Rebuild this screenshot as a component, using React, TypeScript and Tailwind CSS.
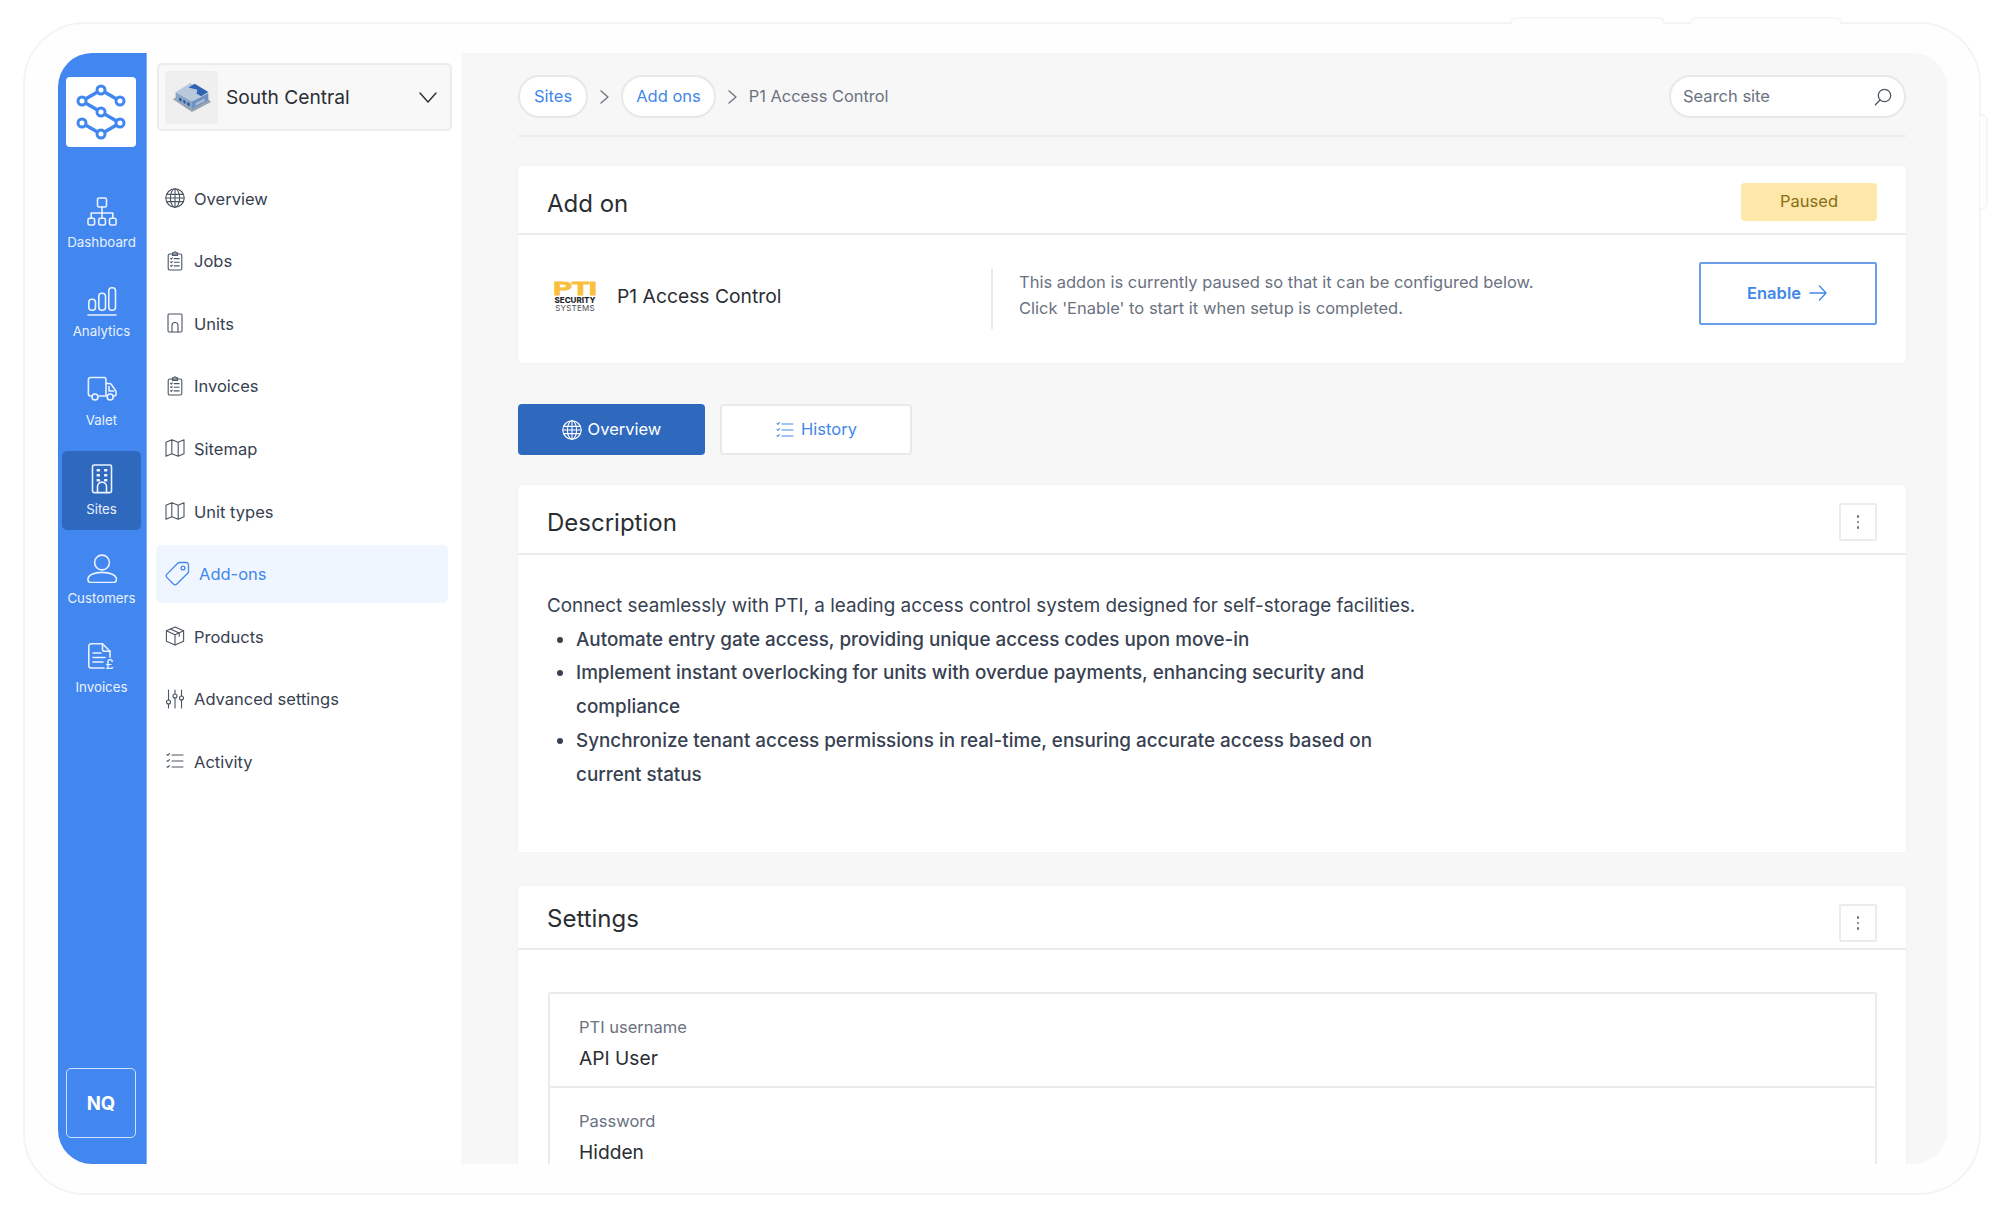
import type { ReactNode } from 'react'

function RailIcon({ children }: { children: ReactNode }) {
  return (
    <svg width="30" height="30" viewBox="0 0 30 30" fill="none" stroke="currentColor" strokeWidth="1.6" strokeLinecap="round" strokeLinejoin="round">
      {children}
    </svg>
  )
}

function NavIcon({ children }: { children: ReactNode }) {
  return (
    <svg className="shrink-0" width="20" height="20" viewBox="0 0 20 20" fill="none" stroke="currentColor" strokeWidth="1.1" strokeLinecap="round" strokeLinejoin="round">
      {children}
    </svg>
  )
}

const GlobeShape = () => (
  <>
    <circle cx="10" cy="10" r="9.2" />
    <ellipse cx="10" cy="10" rx="4.6" ry="9.2" />
    <path d="M10 .8v18.4M1.6 6.4h16.8M.8 10h18.4M1.6 13.6h16.8" />
  </>
)

const ListShape = () => (
  <>
    <path d="M2 3.5l.8.9L4.4 2.6M2 9.6l.8.9 1.6-1.8M2 15.6l.8.9 1.6-1.8" />
    <path d="M7 4h11M7 10h11M7 16h11" />
  </>
)

const ClipboardShape = () => (
  <>
    <rect x="3.2" y="3" width="13.6" height="16" rx="1.6" />
    <path d="M7.5 3V1.9h1.4a1.1 1.1 0 0 1 2.2 0h1.4V3v1.4h-5V3z" />
    <path d="M5.6 7.4l.7.7 1-1.2M5.6 11l.7.7 1-1.2M5.6 14.7l.7.7 1-1.2M9.2 7.6h5M9.2 11.2h5M9.2 14.9h5" />
  </>
)

const MapShape = () => (
  <path d="M1 4.2l5.8-2.4 6.4 2.4L19 1.8v14l-5.8 2.4-6.4-2.4L1 18.2zM6.8 1.8v14M13.2 4.2v14" />
)

const navItems: { label: string; icon: ReactNode }[] = [
  { label: 'Overview', icon: <GlobeShape /> },
  { label: 'Jobs', icon: <ClipboardShape /> },
  {
    label: 'Units',
    icon: (
      <>
        <rect x="3" y="1" width="14" height="18" rx="1.2" />
        <path d="M7 19v-6.5a3 3 0 0 1 6 0V19" />
      </>
    ),
  },
  { label: 'Invoices', icon: <ClipboardShape /> },
  { label: 'Sitemap', icon: <MapShape /> },
  { label: 'Unit types', icon: <MapShape /> },
  { label: 'Add-ons', icon: null },
  {
    label: 'Products',
    icon: (
      <>
        <path d="M10 1l8.6 3.8v10.4L10 19l-8.6-3.8V4.8z" />
        <path d="M1.4 4.8L10 8.8l8.6-4M10 8.8V19M5.4 2.9l8.8 4v3.4" />
      </>
    ),
  },
  {
    label: 'Advanced settings',
    icon: (
      <>
        <path d="M3.5 1v10M3.5 15v4M10 1v4M10 9v10M16.5 1v6M16.5 11v8" />
        <circle cx="3.5" cy="13" r="2" />
        <circle cx="10" cy="7" r="2" />
        <circle cx="16.5" cy="9" r="2" />
      </>
    ),
  },
  { label: 'Activity', icon: <ListShape /> },
]

const railItems: { label: string; active?: boolean; icon: ReactNode }[] = [
  {
    label: 'Dashboard',
    icon: (
      <>
        <rect x="10.5" y="1" width="9" height="9" rx="1.4" />
        <path d="M15 10v6M4.2 21v-5h21.6v5M15 16v5" />
        <rect x="1" y="21.3" width="6.6" height="6.7" rx="1.6" />
        <rect x="11.8" y="21.3" width="6.6" height="6.7" rx="1.6" />
        <rect x="22.5" y="21.3" width="6.6" height="6.7" rx="1.6" />
      </>
    ),
  },
  {
    label: 'Analytics',
    icon: (
      <>
        <rect x="1.8" y="13.3" width="6.7" height="11" rx="3" />
        <rect x="11.8" y="7.3" width="6.7" height="17" rx="3" />
        <rect x="21.8" y="1.7" width="6.7" height="22.6" rx="3" />
        <path d="M1 29h28" />
      </>
    ),
  },
  {
    label: 'Valet',
    icon: (
      <g transform="translate(0 -2.5)">
        <path d="M4.5 23.5H3.4a2 2 0 0 1-2-2V7a2 2 0 0 1 2-2h13.600a2 2 0 0 1 2 2v16.500h-7" />
        <path d="M19 11h3.400c.8 0 1.500.4 1.900 1l3.900 5.400c.5.6.8 1.300.8 2.100V22a1.600 1.600 0 0 1-1.600 1.500h-1.200" />
        <path d="M22 14v4.500h4.800" />
        <circle cx="8" cy="24.5" r="3" />
        <circle cx="23.2" cy="24.5" r="3" />
      </g>
    ),
  },
  {
    label: 'Sites',
    active: true,
    icon: (
      <g transform="translate(0 -1)">
        <rect x="5.5" y="2" width="19" height="27.6" rx="1.6" />
        <path d="M10.5 29.600v-6a4.500 4.500 0 0 1 9 0v6" />
        <g fill="currentColor" stroke="none">
          <rect x="9.6" y="6" width="3.4" height="2.6" rx=".6" />
          <rect x="17" y="6" width="3.4" height="2.6" rx=".6" />
          <rect x="9.6" y="11" width="3.4" height="2.6" rx=".6" />
          <rect x="17" y="11" width="3.4" height="2.6" rx=".6" />
          <rect x="9.6" y="16" width="3.4" height="2.6" rx=".6" />
          <rect x="17" y="16" width="3.4" height="2.6" rx=".6" />
        </g>
      </g>
    ),
  },
  {
    label: 'Customers',
    icon: (
      <>
        <circle cx="15" cy="9.5" r="7.4" />
        <path d="M4.500 29.600h21c2.400 0 4-1.200 4-3.100C29.500 22 23 19.400 15 19.400S.9 22 .9 26.500c0 1.900 1.200 3.100 3.600 3.100z" />
      </>
    ),
  },
  {
    label: 'Invoices',
    icon: (
      <>
        <path d="M17 26H4a2.200 2.200 0 0 1-2.200-2.200V4A2.200 2.200 0 0 1 4 1.800h11.500l7.500 7.400v6" />
        <path d="M15.500 1.800v5.400a2 2 0 0 0 2 2H23" />
        <path d="M6 11h8M6 15.500h12M6 20h10" />
        <text x="18.5" y="27" fontFamily="Inter" fontSize="13" fontWeight="500" fill="currentColor" stroke="none">£</text>
      </>
    ),
  },
]

function Building() {
  return (
    <svg width="40" height="35" viewBox="0 0 44 38">
      <path d="M1 21L22 35l21-11-3-3L22 31 4 19z" fill="#9aa4ae" />
      <path d="M4 13l18 10v9L4 20z" fill="#8ca6c6" />
      <path d="M22 23l18-9v8L22 32z" fill="#6f92c2" />
      <path d="M4 13L20 3l20 11-18 9z" fill="#b9c9dc" />
      <path d="M18 8l7-4 15 9-8 4.600-5-3 1-4z" fill="#2f64b4" />
      <path d="M8 19l2.400 1.300v3.400L8 22.400zM12.500 21.500l2.400 1.300v3.400l-2.400-1.300zM17 24l2.400 1.300v3.400L17 27.400z" fill="#1f4f9e" />
      <path d="M26 25l10-5v3l-10 5z" fill="#a8bcd4" />
    </svg>
  )
}

function LogoMark() {
  const nodes = [[35, 13], [16, 24], [54, 24], [35, 35], [16, 46], [54, 46], [35, 57]]
  return (
    <svg width="70" height="70" viewBox="0 0 70 70" fill="none">
      <path d="M54 24L35 13 16 24l19 11 19 11-19 11-19-11" stroke="#4287f0" strokeWidth="3.5" />
      {nodes.map(([x, y]) => (
        <circle key={`${x}-${y}`} cx={x} cy={y} r="4" fill="#fff" stroke="#4287f0" strokeWidth="3" />
      ))}
    </svg>
  )
}

function Sep() {
  return (
    <svg width="9" height="14" viewBox="0 0 9 14" fill="none" stroke="#6b7280" strokeWidth="1.3" strokeLinecap="round" strokeLinejoin="round">
      <path d="M1 1l7 6-7 6" />
    </svg>
  )
}

function Dots({ className }: { className: string }) {
  return (
    <div className={`flex h-[38px] w-[38px] flex-col items-center justify-center gap-[3px] rounded-[2px] border-2 border-[#ececec] bg-white ${className}`}>
      <span className="h-[2.5px] w-[2.5px] rounded-full bg-[#6b7280]" />
      <span className="h-[2.5px] w-[2.5px] rounded-full bg-[#6b7280]" />
      <span className="h-[2.5px] w-[2.5px] rounded-full bg-[#6b7280]" />
    </div>
  )
}

function CardHeader({ title, h, titleClass, children }: { title: string; h: string; titleClass: string; children?: ReactNode }) {
  return (
    <div className={`flex items-center justify-between border-b-2 border-[#ebebeb] pl-[29px] pr-[29px] ${h}`}>
      <h2 className={`text-[24px] leading-[30px] font-normal text-[#2a2e33] ${titleClass}`}>{title}</h2>
      {children}
    </div>
  )
}

export default function App() {
  return (
    <div className="h-[1218px] w-[2000px] overflow-hidden bg-white pl-[23px] pt-[22px] font-['Inter','Liberation_Sans',sans-serif]">
      <div className="relative h-[1173px] w-[1958px] rounded-[62px] border-2 border-[#f4f4f4] bg-[#fefefe] pl-[33px] pt-[29px]">
        {/* Side buttons of the tablet */}
        <div className="absolute left-[1485px] top-[-7px] h-[8px] w-[155px] rounded-t-[6px] border-x-2 border-t-2 border-[#f6f6f6] bg-[#fefefe]" />
        <div className="absolute left-[1664px] top-[-7px] h-[8px] w-[153px] rounded-t-[6px] border-x-2 border-t-2 border-[#f6f6f6] bg-[#fefefe]" />
        <div className="absolute left-[1955px] top-[90px] h-[96px] w-[8px] rounded-r-[6px] border-y-2 border-r-2 border-[#f6f6f6] bg-[#fefefe]" />

        <div className="flex h-[1111px] w-[1889px] overflow-hidden rounded-[34px]">
          {/* Blue rail */}
          <aside className="flex w-[89px] shrink-0 flex-col border-r border-[#7fb0f5] bg-[#4287f0] pl-[4px] text-[#eaf2fe]">
            <div className="ml-[4px] mt-[24px] h-[70px] w-[70px] rounded-[4px] bg-white">
              <LogoMark />
            </div>
            <div className="mt-[37px] flex flex-col gap-[10px]">
              {railItems.map((item) => (
                <div
                  key={item.label}
                  className={`flex h-[79px] w-[79px] flex-col items-center rounded-[5px] pt-[13px] ${item.active ? 'bg-[#2f69bd]' : ''}`}
                >
                  <RailIcon>{item.icon}</RailIcon>
                  <span className="mt-[7px] text-[13.3px] leading-[16px]">{item.label}</span>
                </div>
              ))}
            </div>
            <div className="ml-[4px] mb-[26px] mt-auto flex h-[70px] w-[70px] items-center justify-center rounded-[5px] border-[1.5px] border-[#cfe0fb] pt-[2px] text-[18.5px] font-bold text-white">
              NQ
            </div>
          </aside>

          {/* Site navigation */}
          <nav className="w-[314px] shrink-0 bg-white pl-[9px]">
            <div className="ml-[1px] mt-[10px] flex h-[68px] w-[295px] items-center rounded-[5px] border-2 border-[#ececec] bg-[#f8f8f8] pl-[6px] pr-[13px]">
              <div className="flex h-[53px] w-[53px] items-center justify-center rounded-[4px] bg-[#efefef]">
                <Building />
              </div>
              <span className="ml-[8px] flex-1 text-[19.2px] leading-[26px] text-[#2a2e33]">South Central</span>
              <svg width="18" height="11" viewBox="0 0 18 11" fill="none" stroke="#2a2e33" strokeWidth="1.4" strokeLinecap="round" strokeLinejoin="round">
                <path d="M1 1l8 9 8-9" />
              </svg>
            </div>
            <ul className="mt-[38px] flex flex-col gap-[4.6px]">
              {navItems.map((item) =>
                item.label === 'Add-ons' ? (
                  <li key={item.label} className="flex h-[58px] w-[292px] items-center rounded-[5px] bg-[#eff6ff] pl-[9px] text-[16.5px] text-[#4287ea]">
                    <svg width="25" height="25" viewBox="0 0 25 25" fill="none" stroke="currentColor" strokeWidth="1.3" strokeLinejoin="round">
                      <path d="M14.500 1.500h6.500a2.500 2.500 0 0 1 2.500 2.500v6.500a2.500 2.500 0 0 1-.8 1.800L11.900 23a2.500 2.500 0 0 1-3.500 0L2 16.600a2.500 2.500 0 0 1 0-3.500L12.700 2.300a2.500 2.500 0 0 1 1.800-.8z" />
                      <circle cx="18" cy="7" r="1.9" />
                    </svg>
                    <span className="ml-[9px] mt-[2px]">{item.label}</span>
                  </li>
                ) : (
                  <li key={item.label} className="flex h-[58px] w-[292px] items-center gap-[9px] pl-[9px] text-[16.5px] text-[#374151]">
                    <span className="text-[#4b5563]">
                      <NavIcon>{item.icon}</NavIcon>
                    </span>
                    <span className="mt-[2px]">{item.label}</span>
                  </li>
                )
              )}
            </ul>
          </nav>

          {/* Main column */}
          <main className="min-w-0 flex-1 overflow-hidden bg-[#f7f7f7] pl-[57px] pr-[41px] pt-[22px]">
            <div className="flex items-center border-b-2 border-[#ededed] pb-[17px]">
              <a className="flex h-[43px] items-center rounded-full border-2 border-[#e8e8e8] bg-white px-[14px] text-[16.5px] text-[#4287ea]">Sites</a>
              <span className="mx-[12px]"><Sep /></span>
              <a className="flex h-[43px] items-center rounded-full border-2 border-[#e8e8e8] bg-white px-[13px] text-[16.5px] text-[#4287ea]">Add ons</a>
              <span className="ml-[12px] mr-[12px]"><Sep /></span>
              <span className="text-[16.4px] text-[#6b7280]">P1 Access Control</span>
              <div className="ml-auto flex h-[43px] w-[237px] items-center justify-between rounded-full border-2 border-[#e8e8e8] bg-white pl-[12px] pr-[12px] text-[16.5px] text-[#6b7280]">
                <span>Search site</span>
                <svg width="18" height="18" viewBox="0 0 18 18" fill="none" stroke="#4b5563" strokeWidth="1.3" strokeLinecap="round">
                  <circle cx="10.5" cy="7.5" r="6.2" />
                  <path d="M6 12l-4.6 4.8" />
                </svg>
              </div>
            </div>

            <section className="mt-[29px] rounded-[4px] bg-white shadow-[0_0_3px_rgba(0,0,0,0.04)]">
              <CardHeader title="Add on" h="h-[69px]" titleClass="mt-[8px]">
                <span className="mt-[4px] flex h-[38px] w-[136px] items-center justify-center rounded-[4px] bg-[#fde7a9] text-[16.5px] text-[#8a6d15]">Paused</span>
              </CardHeader>
              <div className="flex h-[128px] items-center pl-[34px] pr-[29px]">
                <div className="mb-[5px] flex w-[46px] flex-col items-center">
                  <span className="inline-block scale-x-[1.55] font-['Liberation_Sans',sans-serif] text-[18px] leading-[14px] font-bold text-[#fbbf3c] [-webkit-text-stroke:1px_#fbbf3c]">PTI</span>
                  <span className="text-[8px] leading-[8px] font-extrabold text-[#26282b]">SECURITY</span>
                  <span className="text-[8px] leading-[8px] tracking-[0.2px] text-[#4b4d50]">SYSTEMS</span>
                </div>
                <span className="mb-[5px] ml-[19px] w-[374px] text-[19.3px] text-[#2a2e33]">P1 Access Control</span>
                <div className="h-[60px] w-[2px] bg-[#e8e8e8]" />
                <p className="mb-[8px] ml-[26px] text-[16.5px] leading-[26px] text-[#6b7280]">
                  This addon is currently paused so that it can be configured below.
                  <br />
                  Click 'Enable' to start it when setup is completed.
                </p>
                <button className="mb-[12px] ml-auto flex h-[63px] w-[178px] items-center justify-center gap-[8px] rounded-[2px] border-2 border-[#6a9fe8] bg-white pr-[2px] text-[16.5px] font-semibold text-[#4287ea]">
                  Enable
                  <svg width="18" height="16" viewBox="0 0 18 16" fill="none" stroke="currentColor" strokeWidth="1.3" strokeLinecap="round" strokeLinejoin="round">
                    <path d="M1 8h16M10.500 1L17 8l-6.500 7" />
                  </svg>
                </button>
              </div>
            </section>

            <div className="mt-[41px] flex gap-[15px]">
              <button className="flex h-[51px] w-[187px] items-center justify-center gap-[6px] rounded-[4px] bg-[#2f69bd] text-[16.5px] text-white">
                <NavIcon><GlobeShape /></NavIcon>
                Overview
              </button>
              <button className="flex h-[51px] w-[192px] items-center justify-center gap-[6px] rounded-[4px] border-2 border-[#e9e9e9] bg-white text-[16.5px] text-[#4287ea]">
                <NavIcon><ListShape /></NavIcon>
                History
              </button>
            </div>

            <section className="mt-[30px] h-[367px] rounded-[4px] bg-white shadow-[0_0_3px_rgba(0,0,0,0.04)]">
              <CardHeader title="Description" h="h-[70px]" titleClass="mt-[8px]">
                <Dots className="mt-[6px]" />
              </CardHeader>
              <div className="pl-[29px] pt-[34px] text-[18.85px] leading-[33.7px] text-[#374151]">
                <p>Connect seamlessly with PTI, a leading access control system designed for self-storage facilities.</p>
                <ul className="w-[830px] list-disc pl-[29px] font-medium">
                  <li>Automate entry gate access, providing unique access codes upon move-in</li>
                  <li>Implement instant overlocking for units with overdue payments, enhancing security and compliance</li>
                  <li>Synchronize tenant access permissions in real-time, ensuring accurate access based on current status</li>
                </ul>
              </div>
            </section>

            <section className="mt-[34px] rounded-[4px] bg-white pb-[40px] shadow-[0_0_3px_rgba(0,0,0,0.04)]">
              <CardHeader title="Settings" h="h-[64px]" titleClass="mt-[4px]">
                <Dots className="mt-[12px]" />
              </CardHeader>
              <div className="ml-[30px] mr-[29px] mt-[42px] rounded-[2px] border-2 border-[#ebebeb]">
                <div className="h-[94px] border-b-2 border-[#ebebeb] pl-[29px] pt-[21px]">
                  <div className="text-[16.5px] leading-[24px] text-[#6b7280]">PTI username</div>
                  <div className="mt-[6px] text-[19.2px] leading-[26px] text-[#2a2e33]">API User</div>
                </div>
                <div className="h-[94px] pl-[29px] pt-[21px]">
                  <div className="text-[16.5px] leading-[24px] text-[#6b7280]">Password</div>
                  <div className="mt-[6px] text-[19.2px] leading-[26px] text-[#2a2e33]">Hidden</div>
                </div>
              </div>
            </section>
          </main>
        </div>
      </div>
    </div>
  )
}
